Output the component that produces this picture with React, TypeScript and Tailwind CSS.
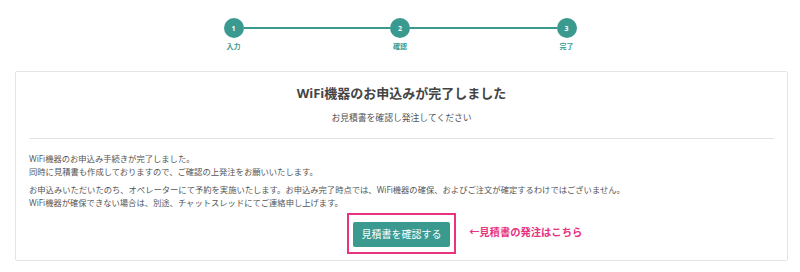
const steps = [
  { no: "1", label: "入力" },
  { no: "2", label: "確認" },
  { no: "3", label: "完了" },
];

function Stepper() {
  return (
    <div className="mx-auto flex w-[353px] items-start pt-[18px]">
      {steps.map((step, i) => (
        <div key={step.no} className="contents">
          {i > 0 && <div className="mt-[9px] h-[2px] flex-1 bg-[#3a9a8f]" />}
          <div className="flex w-5 flex-col items-center">
            <div className="flex h-5 w-5 items-center justify-center rounded-full bg-[#3a9a8f] text-[7px] font-bold leading-none text-white">
              {step.no}
            </div>
            <div className="mt-[4px] whitespace-nowrap text-[7px] font-bold leading-[10px] text-[#3a9a8f]">
              {step.label}
            </div>
          </div>
        </div>
      ))}
    </div>
  );
}

export default function App() {
  return (
    <div
      className="h-[272px] w-[800px] overflow-hidden bg-white"
      style={{ fontFamily: '"Open Sans", "Noto Sans CJK JP", sans-serif' }}
    >
      <Stepper />

      <section className="ml-[15px] mt-[19px] w-[773px] rounded-[2px] border border-[#e3e6e8] bg-white px-[13px] pb-[6px]">
        <h1 className="pt-[12px] text-center text-[13px] font-bold leading-[18px] text-[#444]">
          WiFi機器のお申込みが完了しました
        </h1>
        <p className="mt-[10px] text-center text-[8.8px] leading-[12px] text-[#555]">
          お見積書を確認し発注してください
        </p>
        <div className="mt-[14px] h-px bg-[#e0e4e6]" />

        <div className="mt-[13px] text-[8.3px] leading-[13px] text-[#555]">
          <p>
            WiFi機器のお申込み手続きが完了しました。
            <br />
            同時に見積書も作成しておりますので、ご確認の上発注をお願いいたします。
          </p>
          <p className="mt-[5px]">
            お申込みいただいたのち、オペレーターにて予約を実施いたします。お申込み完了時点では、WiFi機器の確保、およびご注文が確定するわけではございません。
            <br />
            WiFi機器が確保できない場合は、別途、チャットスレッドにてご連絡申し上げます。
          </p>
        </div>

        <div className="mt-[4px] flex justify-center">
          <div className="relative">
            <div className="border-2 border-[#e8337f] px-[4px] py-[5px]">
              <button
                type="button"
                className="h-[25px] w-[97px] rounded-[2px] bg-[#3a9a8f] text-[10px] leading-none text-white"
              >
                見積書を確認する
              </button>
            </div>
            <div className="absolute left-[calc(100%+13px)] top-1/2 -translate-y-1/2 whitespace-nowrap text-[10.3px] font-bold text-[#e8337f]">
              ←見積書の発注はこちら
            </div>
          </div>
        </div>
      </section>
    </div>
  );
}
